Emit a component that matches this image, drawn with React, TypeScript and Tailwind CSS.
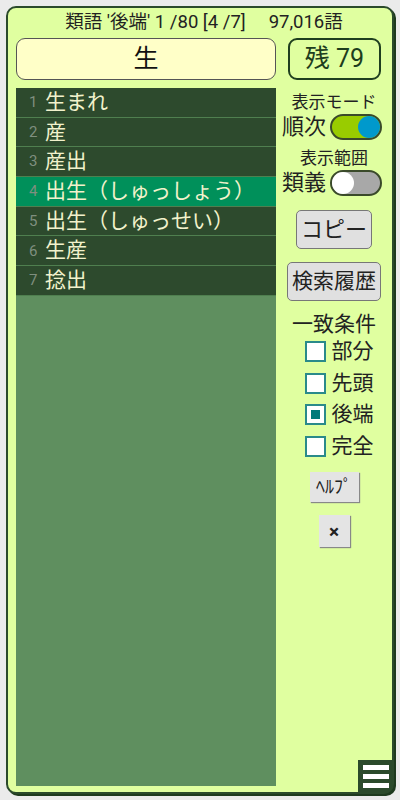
import { useState } from "react";

const words = [
  "生まれ",
  "産",
  "産出",
  "出生（しゅっしょう）",
  "出生（しゅっせい）",
  "生産",
  "捻出",
];

const modes = ["部分", "先頭", "後端", "完全"];

function Toggle({ on }: { on: boolean }) {
  return (
    <div
      className={`relative w-[52px] h-[26px] rounded-full border-2 border-[#3a4a2a] ${
        on ? "bg-[#99cc00]" : "bg-[#a8a8a8]"
      }`}
    >
      <div
        className={`absolute top-[0px] w-[22px] h-[22px] rounded-full ${
          on ? "right-[0px] bg-[#0099cc]" : "left-[0px] bg-white"
        }`}
      />
    </div>
  );
}

export default function App() {
  const [selected, setSelected] = useState(3);
  const [mode, setMode] = useState(2);

  return (
    <div
      className="w-[400px] h-[800px] bg-[#ebebeb] p-[6px]"
      style={{ fontFamily: 'Roboto, "Noto Sans CJK JP", sans-serif' }}
    >
      <div className="relative h-[788px] rounded-[10px] border-2 border-[#2b4a2b] bg-[#e0ffa0] shadow-[2px_2px_0_#1e3a1e] flex flex-col pl-[8px]">
        <div className="h-[28px] flex items-center justify-center text-[18.5px] text-[#222] whitespace-pre leading-none">
          {"類語 '後端' 1 /80 [4 /7]     97,016語"}
        </div>

        <div className="flex gap-[12px] mt-[2px]">
          <div className="w-[260px] h-[42px] rounded-[9px] border border-[#555] bg-[#ffffc8] flex items-center justify-center text-[25px] text-[#111]">
            生
          </div>
          <div className="w-[93px] h-[42px] rounded-[9px] border-2 border-[#1f3f1f] flex items-center justify-center text-[25px] text-[#1d3d1d]">
            残 79
          </div>
        </div>

        <div className="flex mt-[8px] flex-1 pb-[6px]">
          <div className="w-[260px] bg-[#5f8f5f] flex flex-col">
            {words.map((w, i) => (
              <div
                key={i}
                onClick={() => setSelected(i)}
                className={`h-[29.7px] flex items-center pl-[13px] border-b border-[#4f7f4f] ${
                  i === selected ? "bg-[#00905a]" : "bg-[#2d4a2d]"
                }`}
              >
                <span className="text-[15px] text-[#7f8f7f] w-[16px]">{i + 1}</span>
                <span className="text-[21px] text-[#f2f2cc] leading-none">{w}</span>
              </div>
            ))}
          </div>

          <div className="flex-1 flex flex-col items-center text-[#222]">
            <div className="h-[18px] flex items-center text-[17px] leading-none mt-[5px]">表示モード</div>
            <div className="h-[26px] flex items-center gap-[4px] mt-[3px] ml-[-4px]">
              <span className="text-[22px] leading-none">順次</span>
              <Toggle on={true} />
            </div>
            <div className="h-[18px] flex items-center text-[17px] leading-none mt-[9px]">表示範囲</div>
            <div className="h-[26px] flex items-center gap-[4px] mt-[3px] ml-[-4px]">
              <span className="text-[22px] leading-none">類義</span>
              <Toggle on={false} />
            </div>

            <button className="mt-[14px] w-[76px] h-[39px] rounded-[5px] border border-[#777] bg-[#e0e0e0] text-[22px] leading-none">
              コピー
            </button>
            <button className="mt-[13px] w-[94px] h-[39px] rounded-[5px] border border-[#777] bg-[#e0e0e0] text-[21px] leading-none">
              検索履歴
            </button>

            <div className="h-[22px] flex items-center text-[21px] leading-none mt-[12px]">一致条件</div>
            <div className="flex flex-col gap-[10.5px] mt-[6px] ml-[10px]">
              {modes.map((m, i) => (
                <div
                  key={m}
                  onClick={() => setMode(i)}
                  className="flex items-center gap-[6px] h-[21px]"
                >
                  <div className="w-[21px] h-[21px] border-2 border-[#2a8a8a] bg-white flex items-center justify-center">
                    {i === mode && <div className="w-[9px] h-[9px] bg-[#007a7a]" />}
                  </div>
                  <span className="text-[21px] leading-none">{m}</span>
                </div>
              ))}
            </div>

            <button className="mt-[15.5px] w-[49px] h-[30px] bg-[#e4e4e4] shadow-[1px_1px_1px_#888] text-[18px] leading-none">
              ﾍﾙﾌﾟ
            </button>
            <button className="mt-[13px] w-[31px] h-[32px] bg-[#e4e4e4] shadow-[1px_1px_1px_#888] text-[19px] font-bold leading-none">
              ×
            </button>
          </div>
        </div>

        <div className="absolute right-[-1px] bottom-[-1px] w-[35px] h-[33px] bg-[#2b4a2b] rounded-br-[8px] flex flex-col items-center justify-center gap-[4px]">
          <div className="w-[26px] h-[5px] bg-white" />
          <div className="w-[26px] h-[5px] bg-white" />
          <div className="w-[26px] h-[5px] bg-white" />
        </div>
      </div>
    </div>
  );
}
